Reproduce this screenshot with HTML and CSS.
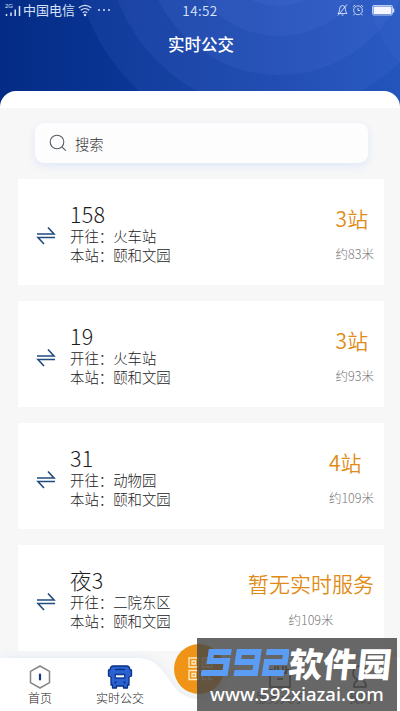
FILE: index.html
```html
<!DOCTYPE html>
<html lang="zh-CN">
<head>
<meta charset="utf-8">
<title>实时公交</title>
<link rel="stylesheet" href="styles.css">
</head>
<body>
<div class="app">
  <header class="header">
    <svg class="rings" viewBox="0 0 400 110" fill="#6f9cff" fill-opacity=".085">
      <circle cx="279" cy="-60" r="206"/><circle cx="279" cy="-60" r="172"/><circle cx="279" cy="-60" r="135"/><circle cx="279" cy="-60" r="96"/><circle cx="279" cy="-60" r="66"/><circle cx="465" cy="-5" r="94" fill-opacity=".05"/>
    </svg>
    <div class="status">
      <div class="status-left">
        <svg width="18" height="14" viewBox="0 0 18 14"><text x="0" y="5" class="net">2G</text><path d="M1.500 11v2M6 9.500v3.500M10.200 6.500v6.500M14.500 3v10" stroke="#d7e2fa" stroke-width="1.500"/></svg>
        <span>中国电信</span>
        <svg class="wifi" width="14" height="14" viewBox="0 0 14 14" fill="none" stroke="#d7e2fa" stroke-width="1.200"><path d="M.8 4.800q6-5 12.400 0M2.700 7.300q4.300-3.600 8.600 0M4.800 9.700q2.200-1.900 4.400 0"/><circle cx="7" cy="12" r=".7" fill="#d7e2fa"/></svg>
        <svg width="14" height="4" viewBox="0 0 14 4" fill="#d7e2fa"><circle cx="2" cy="2" r="1"/><circle cx="7" cy="2" r="1"/><circle cx="12" cy="2" r="1"/></svg>
      </div>
      <span class="time">14:52</span>
      <div class="status-right">
        <svg width="11" height="12" viewBox="0 0 11 12" fill="none" stroke="#d7e2fa" stroke-width=".9"><path d="M1 9.500q1.500-1 1.500-4Q2.500 1.500 5.500 1.500t3 4q0 3 1.500 4zM4.500 11h2M10 .5L1 11.500"/></svg>
        <svg width="12" height="12" viewBox="0 0 12 12" fill="none" stroke="#d7e2fa" stroke-width=".9"><circle cx="6" cy="6.300" r="4.400"/><path d="M6 4v2.500h2M.8 2.800L3 1M11.200 2.800L9 1M2.500 10l-1 1.300M9.500 10l1 1.300"/></svg>
        <svg class="battery" width="23" height="11" viewBox="0 0 23 11"><rect x=".5" y=".5" width="20" height="9.500" rx="1.500" fill="none" stroke="#bccdf2"/><rect x="1.500" y="1.500" width="18" height="7.500" fill="#f3f6ff"/><path d="M21.500 3.500v4" stroke="#d7e2fa" stroke-width="1.500"/></svg>
      </div>
    </div>
    <h1>实时公交</h1>
  </header>
  <main class="panel">
    <div class="content">
      <div class="search">
        <svg width="18" height="18" viewBox="0 0 18 18" fill="none" stroke="#555a62" stroke-width="1.100"><circle cx="8" cy="8" r="6.800"/><path d="M12.800 12.800l4 3.900"/></svg>
        <span>搜索</span>
      </div>
      <section class="card">
        <svg class="swap" viewBox="0 0 20 20"><path d="M1 8h17l-6-6.500M19 11.500H2l6 6.500"/></svg>
        <div class="route"><h2>158</h2><p>开往：火车站</p><p>本站：颐和文园</p></div>
        <div class="eta"><strong>3站</strong><small>约83米</small></div>
      </section>
      <section class="card">
        <svg class="swap" viewBox="0 0 20 20"><path d="M1 8h17l-6-6.500M19 11.500H2l6 6.500"/></svg>
        <div class="route"><h2>19</h2><p>开往：火车站</p><p>本站：颐和文园</p></div>
        <div class="eta"><strong>3站</strong><small>约93米</small></div>
      </section>
      <section class="card">
        <svg class="swap" viewBox="0 0 20 20"><path d="M1 8h17l-6-6.500M19 11.500H2l6 6.500"/></svg>
        <div class="route"><h2>31</h2><p>开往：动物园</p><p>本站：颐和文园</p></div>
        <div class="eta"><strong>4站</strong><small>约109米</small></div>
      </section>
      <section class="card">
        <svg class="swap" viewBox="0 0 20 20"><path d="M1 8h17l-6-6.500M19 11.500H2l6 6.500"/></svg>
        <div class="route"><h2>夜3</h2><p>开往：二院东区</p><p>本站：颐和文园</p></div>
        <div class="eta centered"><strong>暂无实时服务</strong><small>约109米</small></div>
      </section>
    </div>
  </main>
  <nav class="tabs">
    <svg class="tabs-bg" viewBox="0 0 400 61"><path d="M0 8H138C158 9 164 23 173 35Q183 49 199 49T225 35C234 23 240 9 260 8H400V61H0z" fill="#fff"/></svg>
    <div class="tab">
      <svg width="24" height="24" viewBox="0 0 24 24"><path d="M12 1l9.500 5.300v11.400L12 23l-9.500-5.300V6.300z" fill="none" stroke="#858585" stroke-width="1.500" stroke-linejoin="round"/><path d="M12 9.500v5" stroke="#143b82" stroke-width="2.200" stroke-linecap="round"/></svg>
      <span>首页</span>
    </div>
    <div class="tab active">
      <svg width="26" height="24" viewBox="0 0 26 24"><path d="M6 1h14q2.500 0 3 4h1.500v6L22 12v8h-1.500v3h-4v-2h-7v2h-4v-3H4v-8l-2.500-1V5H3q.5-4 3-4z" fill="#2a62d2" stroke="#0a2f83" stroke-width="1.300" stroke-linejoin="round"/><path d="M8 4.500h10" stroke="#0a2f83" stroke-width="1.300"/><path d="M7.500 8.500h11v5.500h-11z" fill="#123e9e"/><path d="M9 11.300h8" stroke="#fff" stroke-width="2"/><path d="M7.500 17.500h2M16.500 17.500h2" stroke="#0a2f83" stroke-width="1.800"/></svg>
      <span>实时公交</span>
    </div>
    <div class="tab scan"></div>
    <div class="tab">
      <svg width="24" height="24" viewBox="0 0 24 24" fill="none" stroke="#333" stroke-width="1.500"><path d="M5 5H2v17h20V5h-3M7 1v7h3V1M15 1v7h3V1M9 14h6"/></svg>
      <span>服务大厅</span>
    </div>
    <div class="tab">
      <svg width="24" height="24" viewBox="0 0 24 24" fill="none" stroke="#333" stroke-width="1.500"><circle cx="12" cy="8" r="7"/><path d="M6 22q0-7 6-7t6 7z"/></svg>
      <span>我的</span>
    </div>
    <div class="fab">
      <svg width="28" height="24" viewBox="0 0 28 24" fill="none" stroke="#ffecc4" stroke-width="1.300"><path d="M1 1h9.500v9H1zM1 13.500h9.500v9H1zM14.500 1H24v9h-9.500z"/><path d="M4 4h3.500v3H4zM4 16.500h3.500v3H4zM17.500 4H21v3h-3.500zM14.500 13.500h3v3h3v-3H24M14.500 19v3.500h4M21 19v3.500h3"/></svg>
    </div>
  </nav>
  <div class="watermark">
    <div class="brand"><svg class="digits" width="88" height="29" viewBox="0 0 88 29" role="img" aria-label="592" fill="none" stroke="#5b9cf5" stroke-width="6"><g transform="skewX(-9)"><path d="M31 4H11v9h17v12H4M59 14H39V4h19v21H37M66 4h20v10H68v11h19"/></g></svg><b>软件园</b></div>
    <div class="site">www.592xiazai.com</div>
  </div>
</div>
</body>
</html>
```
FILE: styles.css
```css
* { box-sizing: border-box; }
body, h1, h2, p { margin: 0; }
body { background: #fff; color: #333; }
.app { position: relative; width: 400px; height: 711px; overflow: hidden; display: flex; flex-direction: column; font-family: "Noto Sans CJK SC", sans-serif; }
.header { position: relative; flex: none; height: 110px; background: linear-gradient(90deg, #042c86 0%, #0a3594 30%, #123fa2 65%, #1c4fb7 100%); color: #fff; }
.rings { position: absolute; inset: 0; width: 400px; height: 110px; }
.status { position: relative; display: grid; grid-template-columns: 1fr auto 1fr; align-items: center; height: 20px; padding: 0 5px; color: #d7e2fa; font-size: 13px; line-height: 20px; }
.status-left { display: flex; align-items: center; }
.status-left .wifi { margin: 0 5px 0 3px; }
.net { font: 6px "Liberation Sans", sans-serif; fill: #d7e2fa; }
.time { font-size: 13.500px; letter-spacing: .4px; font-weight: 350; }
.status-right { display: flex; justify-content: flex-end; align-items: center; gap: 4px; }
.battery { margin-left: 4px; }
h1 { position: relative; margin-top: 12px; padding-left: 2px; text-align: center; font-size: 16.500px; line-height: 24px; font-weight: 500; }
.panel { position: relative; flex: none; height: 620px; margin-top: -19px; padding-top: 17px; background: #fff; border-radius: 16px 16px 0 0; }
.content { display: flex; flex-direction: column; height: 603px; padding: 15px 16px 0 18px; background: #f7f7f7; gap: 15.600px; }
.search { display: flex; flex: none; align-items: center; gap: 8px; height: 40px; margin: 0 16px 0 17px; padding: 0 14px; border-radius: 9px; background: #fdfdfe; box-shadow: 0 3px 9px #dfe7f6; font-size: 14.300px; font-weight: 300; }
.card { flex: none; display: flex; height: 106.500px; padding: 21px 10px 0 18px; background: #fff; }
.swap { flex: none; width: 20px; height: 20px; margin-top: 26px; fill: none; stroke: #214b80; stroke-width: 1.600; }
.route { margin-left: 14px; }
.route h2 { font-size: 21.500px; line-height: 27px; font-weight: 300; letter-spacing: .3px; color: #1b1b1b; }
.route p { font-size: 14.400px; line-height: 19px; font-weight: 300; color: #222; }
.route h2 + p { margin-top: -1px; }
.eta { margin-left: auto; padding-top: 1px; display: flex; flex-direction: column; align-items: flex-start; }
.eta strong { font-size: 21px; line-height: 34px; font-weight: 350; color: #e08b16; }
.eta small { margin-top: 9px; font-size: 12.500px; line-height: 19px; font-weight: 300; color: #777; }
.centered { padding-top: 0; align-items: center; }
.centered small { margin-top: 10px; }
.tabs { position: absolute; z-index: 1; left: 0; bottom: 0; width: 400px; height: 61px; display: grid; grid-template-columns: repeat(5, 80px); }
.tabs-bg { position: absolute; width: 400px; height: 61px; filter: drop-shadow(0 -2px 4px #e8eef5); }
.tab { position: relative; display: flex; flex-direction: column; align-items: center; padding-top: 15px; font-size: 12px; line-height: 18px; font-weight: 300; color: #222; }
.fab { position: absolute; left: 174px; top: -6px; display: flex; align-items: center; justify-content: center; width: 50px; height: 50px; border-radius: 50%; background: #ef9416; padding-left: 6px; }
.watermark { position: absolute; z-index: 2; left: 197px; bottom: 0; width: 200px; height: 73px; background: rgba(70, 70, 70, .82); color: #fff; }
.brand { display: flex; align-items: center; height: 45px; padding: 4px 0 0 4px; }
.digits { flex: none; }
.brand b { font-size: 34px; line-height: 40px; font-weight: 900; letter-spacing: .3px; transform: skewX(-6deg); }
.site { height: 24px; text-align: center; font-family: "Noto Sans", sans-serif; font-size: 18.500px; line-height: 22px; font-weight: 500; }
```
